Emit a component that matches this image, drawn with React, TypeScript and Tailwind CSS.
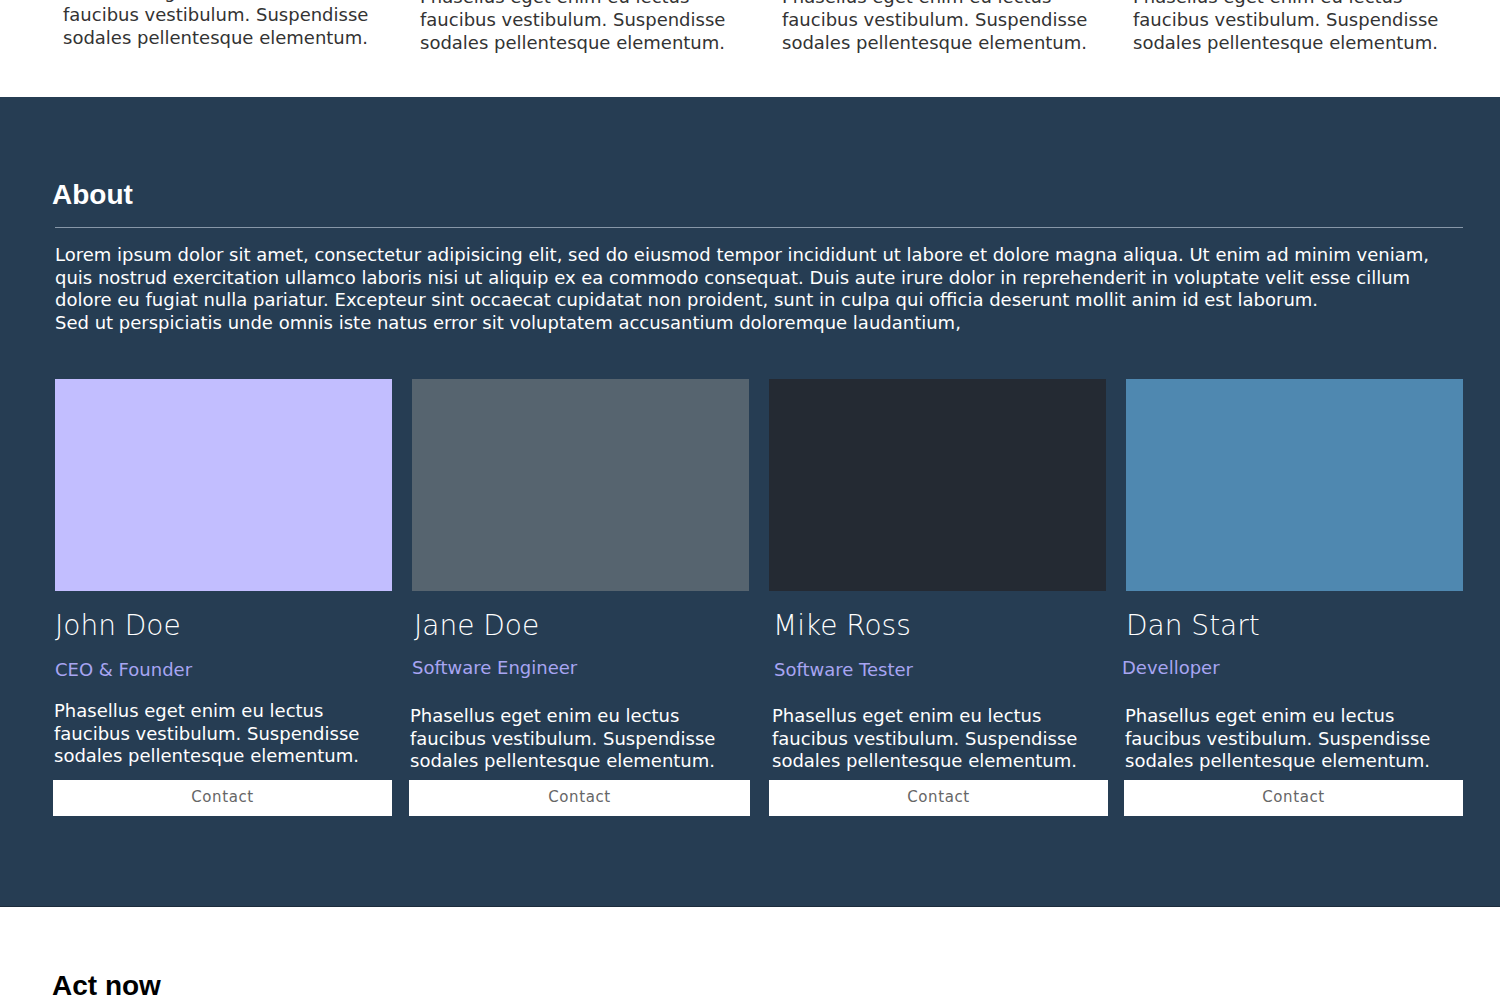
import React from 'react';

const font = { fontFamily: '"DejaVu Sans", "Liberation Sans", sans-serif' };
const headFont = { fontFamily: '"Liberation Sans", Arial, sans-serif' };

const blurb = 'Phasellus eget enim eu lectus faucibus vestibulum. Suspendisse sodales pellentesque elementum.';

interface Member {
  name: string;
  role: string;
  color: string;
  roleClass: string;
  textClass: string;
  buttonClass: string;
  nameClass: string;
}

const members: Member[] = [
  { name: 'John Doe', role: 'CEO & Founder', color: 'bg-[#c2beff]', nameClass: 'pl-0', roleClass: 'mt-[16px] pl-0', textClass: 'mt-[19px] -ml-px', buttonClass: 'mt-[12px] -ml-[2px]' },
  { name: 'Jane Doe', role: 'Software Engineer', color: 'bg-[#56646f]', nameClass: 'pl-[2px]', roleClass: 'mt-[14px] pl-0', textClass: 'mt-[26px] -ml-[2px]', buttonClass: 'mt-[7px] -ml-[3px] -mr-px' },
  { name: 'Mike Ross', role: 'Software Tester', color: 'bg-[#242a33]', nameClass: 'pl-[4px]', roleClass: 'mt-[16px] pl-[5px]', textClass: 'mt-[24px] pl-[3px]', buttonClass: 'mt-[7px] -mr-[2px]' },
  { name: 'Dan Start', role: 'Develloper', color: 'bg-[#4f88b0]', nameClass: 'pl-0', roleClass: 'mt-[14px] -ml-[4px]', textClass: 'mt-[26px] -ml-[1px]', buttonClass: 'mt-[7px] -ml-[2px]' },
];

function TeamCard({ member }: { member: Member }) {
  return (
    <div className="flex flex-col">
      {/* photo placeholder */}
      <div className={`h-[212px] w-full ${member.color}`} />
      <div className={`mt-[18px] text-[28px] font-extralight leading-[34px] text-white ${member.nameClass}`}>{member.name}</div>
      <div className={`text-[18px] leading-[22px] text-[#a8a5f2] ${member.roleClass}`}>{member.role}</div>
      <p className={`text-[18px] leading-[22.5px] text-white ${member.textClass}`}>{blurb}</p>
      <button className={`h-[36px] bg-white text-[15px] tracking-[0.6px] text-[#666] ${member.buttonClass}`}>
        Contact
      </button>
    </div>
  );
}

export default function App() {
  return (
    <div className="w-[1500px] overflow-hidden bg-white" style={font}>
      {/* tail of the previous section */}
      <section className="h-[97px] overflow-hidden">
        <div className="-mt-[15px] grid grid-cols-[357px_362px_351px_430px] text-[18px] leading-[23px] text-[#333]">
          {[0, 1, 2, 3].map(i => (
            <p key={i} className={`w-[400px] pl-[63px] ${i === 0 ? '-mt-[5px]' : ''}`}>
              <span className="block w-[340px]">{blurb}</span>
            </p>
          ))}
        </div>
      </section>

      {/* About */}
      <section className="border-b border-[#1c2c3c] bg-[#263d53] pb-[90px] pl-[55px] pr-[37px] pt-[81px]">
        <h2 className="-ml-[3px] text-[28px] font-bold leading-[34px] text-white" style={headFont}>About</h2>
        <div className="mt-[15px] h-px bg-[#8797a8]" />
        <p className="mt-[16px] whitespace-nowrap text-[18px] leading-[22.5px] text-white">
          Lorem ipsum dolor sit amet, consectetur adipisicing elit, sed do eiusmod tempor incididunt ut labore et dolore magna aliqua. Ut enim ad minim veniam,
          <br />
          quis nostrud exercitation ullamco laboris nisi ut aliquip ex ea commodo consequat. Duis aute irure dolor in reprehenderit in voluptate velit esse cillum
          <br />
          dolore eu fugiat nulla pariatur. Excepteur sint occaecat cupidatat non proident, sunt in culpa qui officia deserunt mollit anim id est laborum.
          <br />
          Sed ut perspiciatis unde omnis iste natus error sit voluptatem accusantium doloremque laudantium,
        </p>

        <div className="mt-[45px] grid grid-cols-4 gap-x-[20px]">
          {members.map(m => (
            <TeamCard key={m.name} member={m} />
          ))}
        </div>
      </section>

      {/* Act now */}
      <section className="pl-[52px] pt-[62px]">
        <h2 className="text-[28px] font-bold leading-[34px] text-black" style={headFont}>Act now</h2>
      </section>
    </div>
  );
}
